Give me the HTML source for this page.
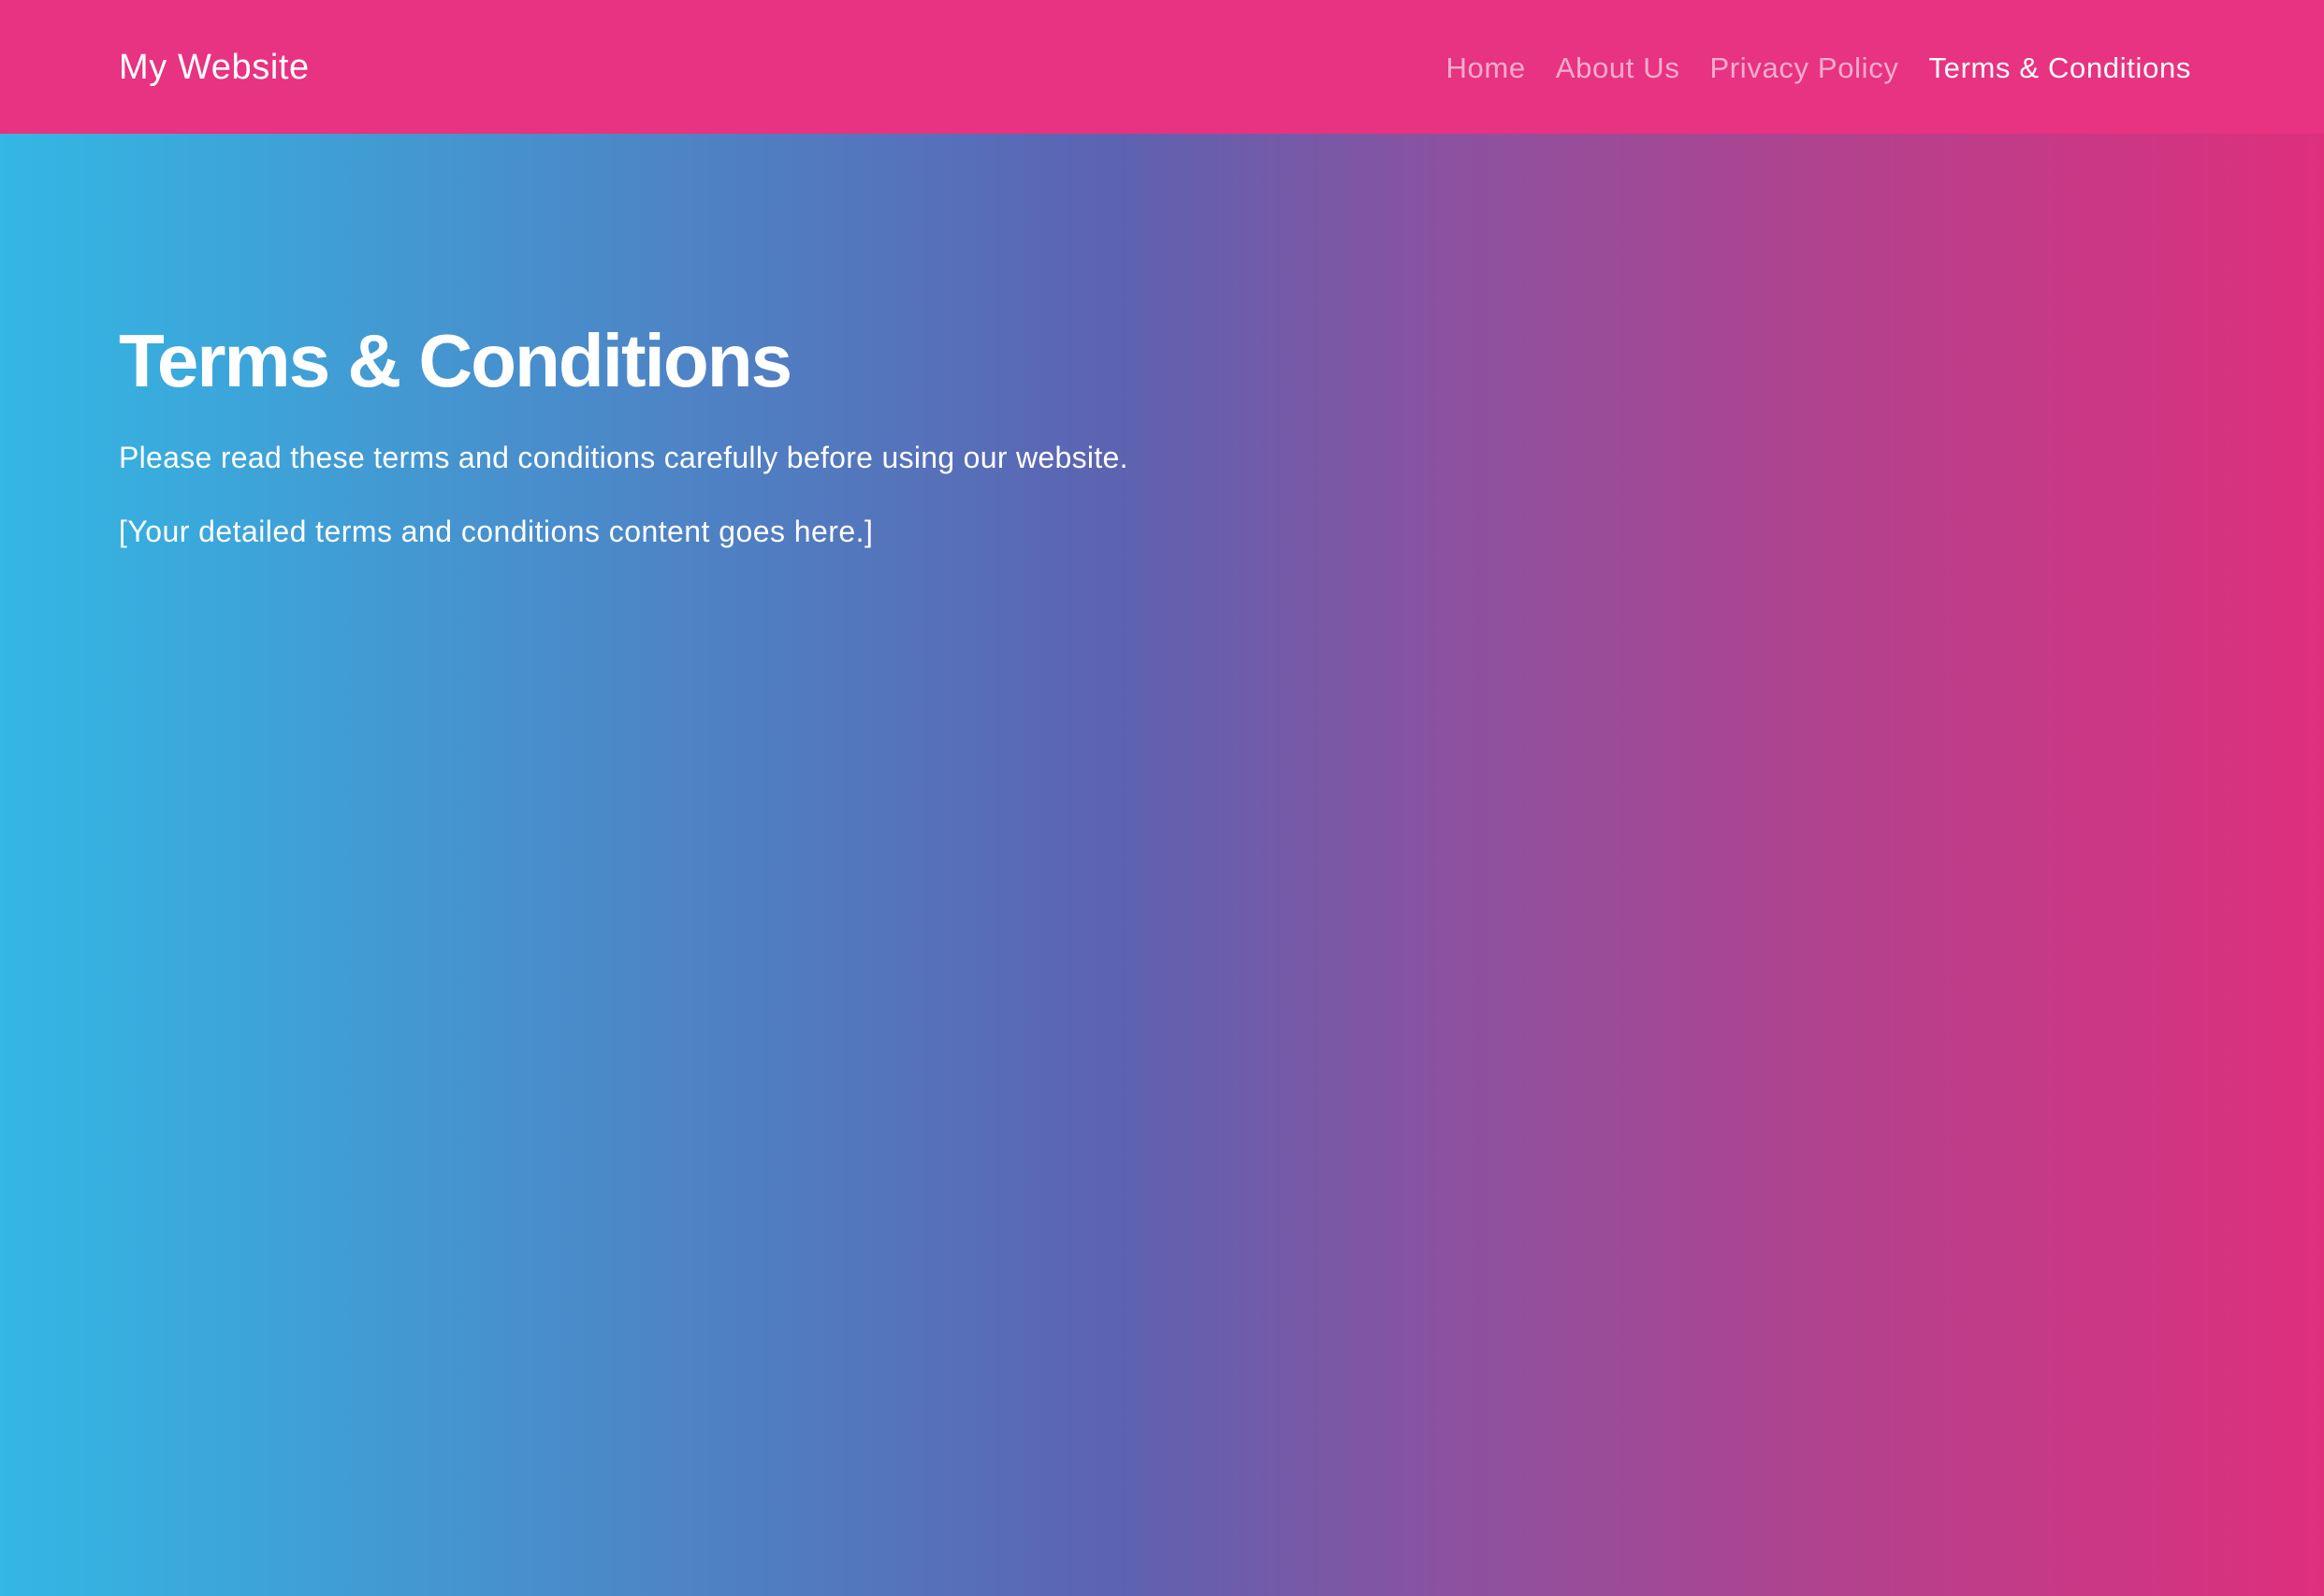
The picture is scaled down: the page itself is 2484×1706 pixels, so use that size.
<!DOCTYPE html>
<html><head><meta charset="utf-8"><style>
html,body{margin:0;padding:0;width:2484px;height:1706px;overflow:hidden}
body{background:linear-gradient(to right,#33b7e4 0%,#4a8bca 25%,#5c63b1 48%,#8a52a0 62%,#b93f8b 82%,#de2f7d 100%);font-family:"Liberation Sans",sans-serif;color:#fff}
nav{height:143px;background:#e83282;position:relative}
.brand{position:absolute;left:127px;top:49px;font-size:38px;line-height:46px;letter-spacing:0.6px}
.links{position:absolute;right:142px;top:54px;font-size:31px;line-height:38px;letter-spacing:0.65px}
.links span{margin-left:32px;color:rgba(255,255,255,.6)}
.links span.a{color:#fff}
h1{position:absolute;left:127px;top:336px;margin:0;font-size:80px;line-height:100px;font-weight:bold;letter-spacing:-2px}
p{position:absolute;left:127px;margin:0;font-size:32px;line-height:38px;letter-spacing:0.3px}
</style></head><body>
<nav><div class="brand">My Website</div>
<div class="links"><span>Home</span><span>About Us</span><span>Privacy Policy</span><span class="a">Terms &amp; Conditions</span></div></nav>
<h1>Terms &amp; Conditions</h1>
<p style="top:470px">Please read these terms and conditions carefully before using our website.</p>
<p style="top:549px;letter-spacing:0.45px">[Your detailed terms and conditions content goes here.]</p>
</body></html>
